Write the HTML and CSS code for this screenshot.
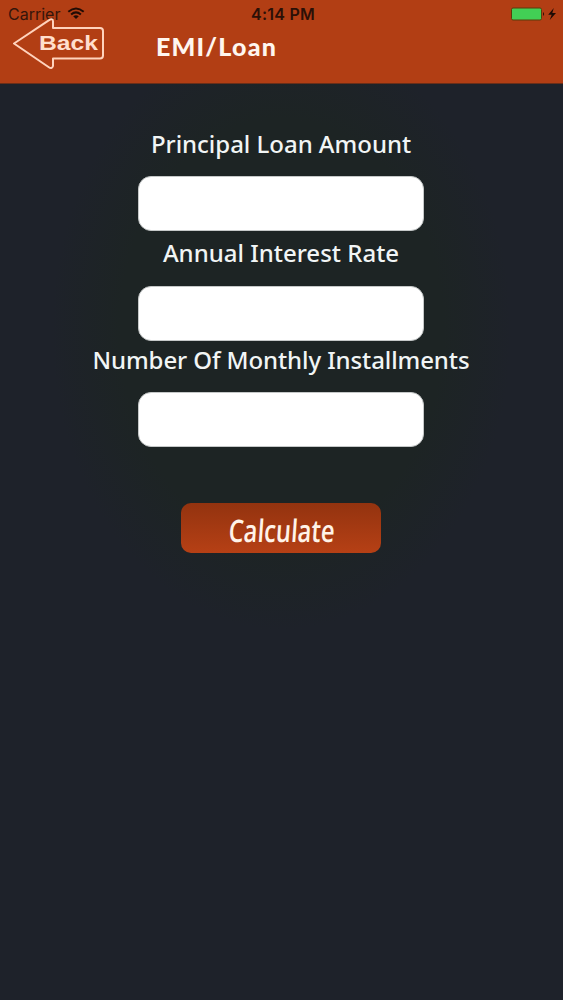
FILE: index.html
```html
<!DOCTYPE html>
<html lang="en">
<head>
<meta charset="utf-8">
<title>EMI/Loan</title>
<link rel="stylesheet" href="styles.css">
</head>
<body>
<header class="header">
  <div class="status">
    <div class="carrier"><span>Carrier</span>
      <svg class="wifi" width="18" height="13" viewBox="0 0 18 13" fill="none" stroke="currentColor" stroke-width="2"><path d="M1.3 4.7Q9-1.8 16.7 4.7M4.1 7.5Q9 3.3 13.9 7.5"/><path d="M9 12 6.2 9.2Q9 7.1 11.8 9.2Z" fill="currentColor" stroke="none"/></svg>
    </div>
    <time class="clock">4:14 PM</time>
    <svg class="battery" width="47" height="14" viewBox="0 0 47 14"><rect x="1.5" y="1" width="30" height="12" rx="1.5" fill="#42cf55" stroke="#5b3b0b"/><path d="M33 5q2.2 2 0 4z" fill="#2b1006"/><path d="M43.8 1 38.2 7.8h3.5L39.7 13 46 6h-3.7z" fill="#1d0b05"/></svg>
  </div>
  <div class="nav">
    <svg class="back" width="94" height="52" viewBox="0 0 94 52" role="img" aria-label="Back"><path d="M2 25.5 37.5 1.8Q41 .3 41 3.5V10H88Q91 10 91 13V37.5Q91 40.5 88 40.5H41V48Q40 51.5 36.5 49Z" fill="none" stroke="#ffd3bd" stroke-width="2" stroke-linejoin="round"/><text class="back-text" x="27" y="31.5" textLength="59" lengthAdjust="spacingAndGlyphs">Back</text></svg>
    <h1 class="title">EMI/Loan</h1>
  </div>
</header>
<main class="form">
  <label class="label first" for="principal">Principal Loan Amount</label>
  <input class="field" id="principal">
  <label class="label second" for="rate">Annual Interest Rate</label>
  <input class="field" id="rate">
  <label class="label third" for="months">Number Of Monthly Installments</label>
  <input class="field" id="months">
  <button class="calculate" aria-label="Calculate"><svg width="200" height="50" viewBox="0 0 200 50"><text class="calc-text" transform="translate(47 39) skewX(-4)" textLength="106" lengthAdjust="spacingAndGlyphs">Calculate</text></svg></button>
</main>
</body>
</html>
```
FILE: styles.css
```css
* { box-sizing: border-box; }
body {
  margin: 0;
  min-height: 1000px;
  background: radial-gradient(ellipse 230px 300px at 50% 330px, #1d2424 70%, #1e222a 100%);
  font-family: "Noto Sans", sans-serif;
}
.header {
  height: 84px;
  background: #b23e14;
  border-bottom: 1px solid #6a2e18;
}
.status {
  height: 28px;
  display: grid;
  grid-template-columns: 1fr auto 1fr;
  align-items: center;
  padding: 0 6px 0 8px;
  font: 16px/28px Inter, sans-serif;
  color: #35150b;
}
.carrier { display: flex; align-items: center; gap: 7px; letter-spacing: 0; }
.wifi { margin-top: -2px; color: #210c05; }
.clock { font-weight: 600; letter-spacing: .25px; margin-left: 1px; color: #2b1007; }
.battery { justify-self: end; }
.nav { display: flex; margin: -10px 0 0 12px; }
.back { display: block; flex: none; }
.back-text {
  font: bold 20px "Liberation Sans", sans-serif;
  fill: #ffdfcd;
}
.title {
  margin: 8px 0 0 50px;
  font: 900 25px/40px Lato, "Noto Sans", sans-serif;
  letter-spacing: 1.2px;
  color: #fff6ef;
}
.form {
  display: flex;
  flex-direction: column;
  align-items: center;
  padding-right: 1px;
}
.label {
  font-size: 24px;
  line-height: 34px;
  font-weight: 500;
  color: #f1f5f5;
  white-space: nowrap;
}
.first { margin: 43px 0 15px; letter-spacing: -.03px; }
.second { margin: 5px 0 16px; }
.third { margin: 2px 0 15px; letter-spacing: -.1px; }
.field {
  width: 286px;
  height: 55px;
  border: 1px solid #c5c8c8;
  border-radius: 13px;
  background: #fff;
  padding: 0 14px;
  font: 24px "Noto Sans", sans-serif;
}
.calculate {
  width: 200px;
  height: 50px;
  margin-top: 56px;
  padding: 0;
  border: 0;
  border-radius: 10px;
  background: linear-gradient(#93330f, #b64015);
}
.calculate svg { display: block; }
.calc-text {
  font: 600 31px "Open Sans", sans-serif;
  fill: #fff3e8;
}
```
